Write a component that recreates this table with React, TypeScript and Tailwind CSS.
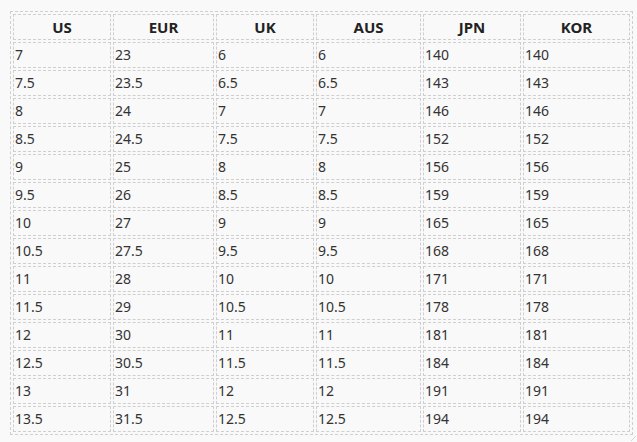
const headers = [
  { label: "US", w: "w-[98px]" },
  { label: "EUR", w: "w-[101px]" },
  { label: "UK", w: "w-[98px]" },
  { label: "AUS", w: "w-[105px]" },
  { label: "JPN", w: "w-[98px]" },
  { label: "KOR", w: "w-[107px]" },
];

const rows = [
  ["7", "23", "6", "6", "140", "140"],
  ["7.5", "23.5", "6.5", "6.5", "143", "143"],
  ["8", "24", "7", "7", "146", "146"],
  ["8.5", "24.5", "7.5", "7.5", "152", "152"],
  ["9", "25", "8", "8", "156", "156"],
  ["9.5", "26", "8.5", "8.5", "159", "159"],
  ["10", "27", "9", "9", "165", "165"],
  ["10.5", "27.5", "9.5", "9.5", "168", "168"],
  ["11", "28", "10", "10", "171", "171"],
  ["11.5", "29", "10.5", "10.5", "178", "178"],
  ["12", "30", "11", "11", "181", "181"],
  ["12.5", "30.5", "11.5", "11.5", "184", "184"],
  ["13", "31", "12", "12", "191", "191"],
  ["13.5", "31.5", "12.5", "12.5", "194", "194"],
];

export default function App() {
  return (
    <div className="relative w-[637px] h-[442px] overflow-hidden bg-[#f9f9f9] pl-[10px] pt-[11px] font-['Noto_Sans',sans-serif] text-[14px]">
      <table className="table-fixed w-[623px] border-separate border-spacing-[2px] border border-dashed border-[#cfcfcf]">
        <thead>
          <tr>
            {headers.map((h) => (
              <th
                key={h.label}
                className={`${h.w} h-[26px] p-px leading-[22px] text-center text-[15px] font-bold text-[#222] border border-dashed border-[#cfcfcf]`}
              >
                {h.label}
              </th>
            ))}
          </tr>
        </thead>
        <tbody>
          {rows.map((r, i) => (
            <tr key={i}>
              {r.map((c, j) => (
                <td
                  key={j}
                  className="h-[26px] p-px leading-[22px] text-left text-[#333] border border-dashed border-[#cfcfcf]"
                >
                  {c}
                </td>
              ))}
            </tr>
          ))}
        </tbody>
      </table>
      <svg
        className="absolute right-0 bottom-0"
        width="7"
        height="7"
        viewBox="0 0 7 7"
      >
        <line x1="1" y1="6" x2="6" y2="1" stroke="#d6d6d6" strokeWidth="1" />
      </svg>
    </div>
  );
}
